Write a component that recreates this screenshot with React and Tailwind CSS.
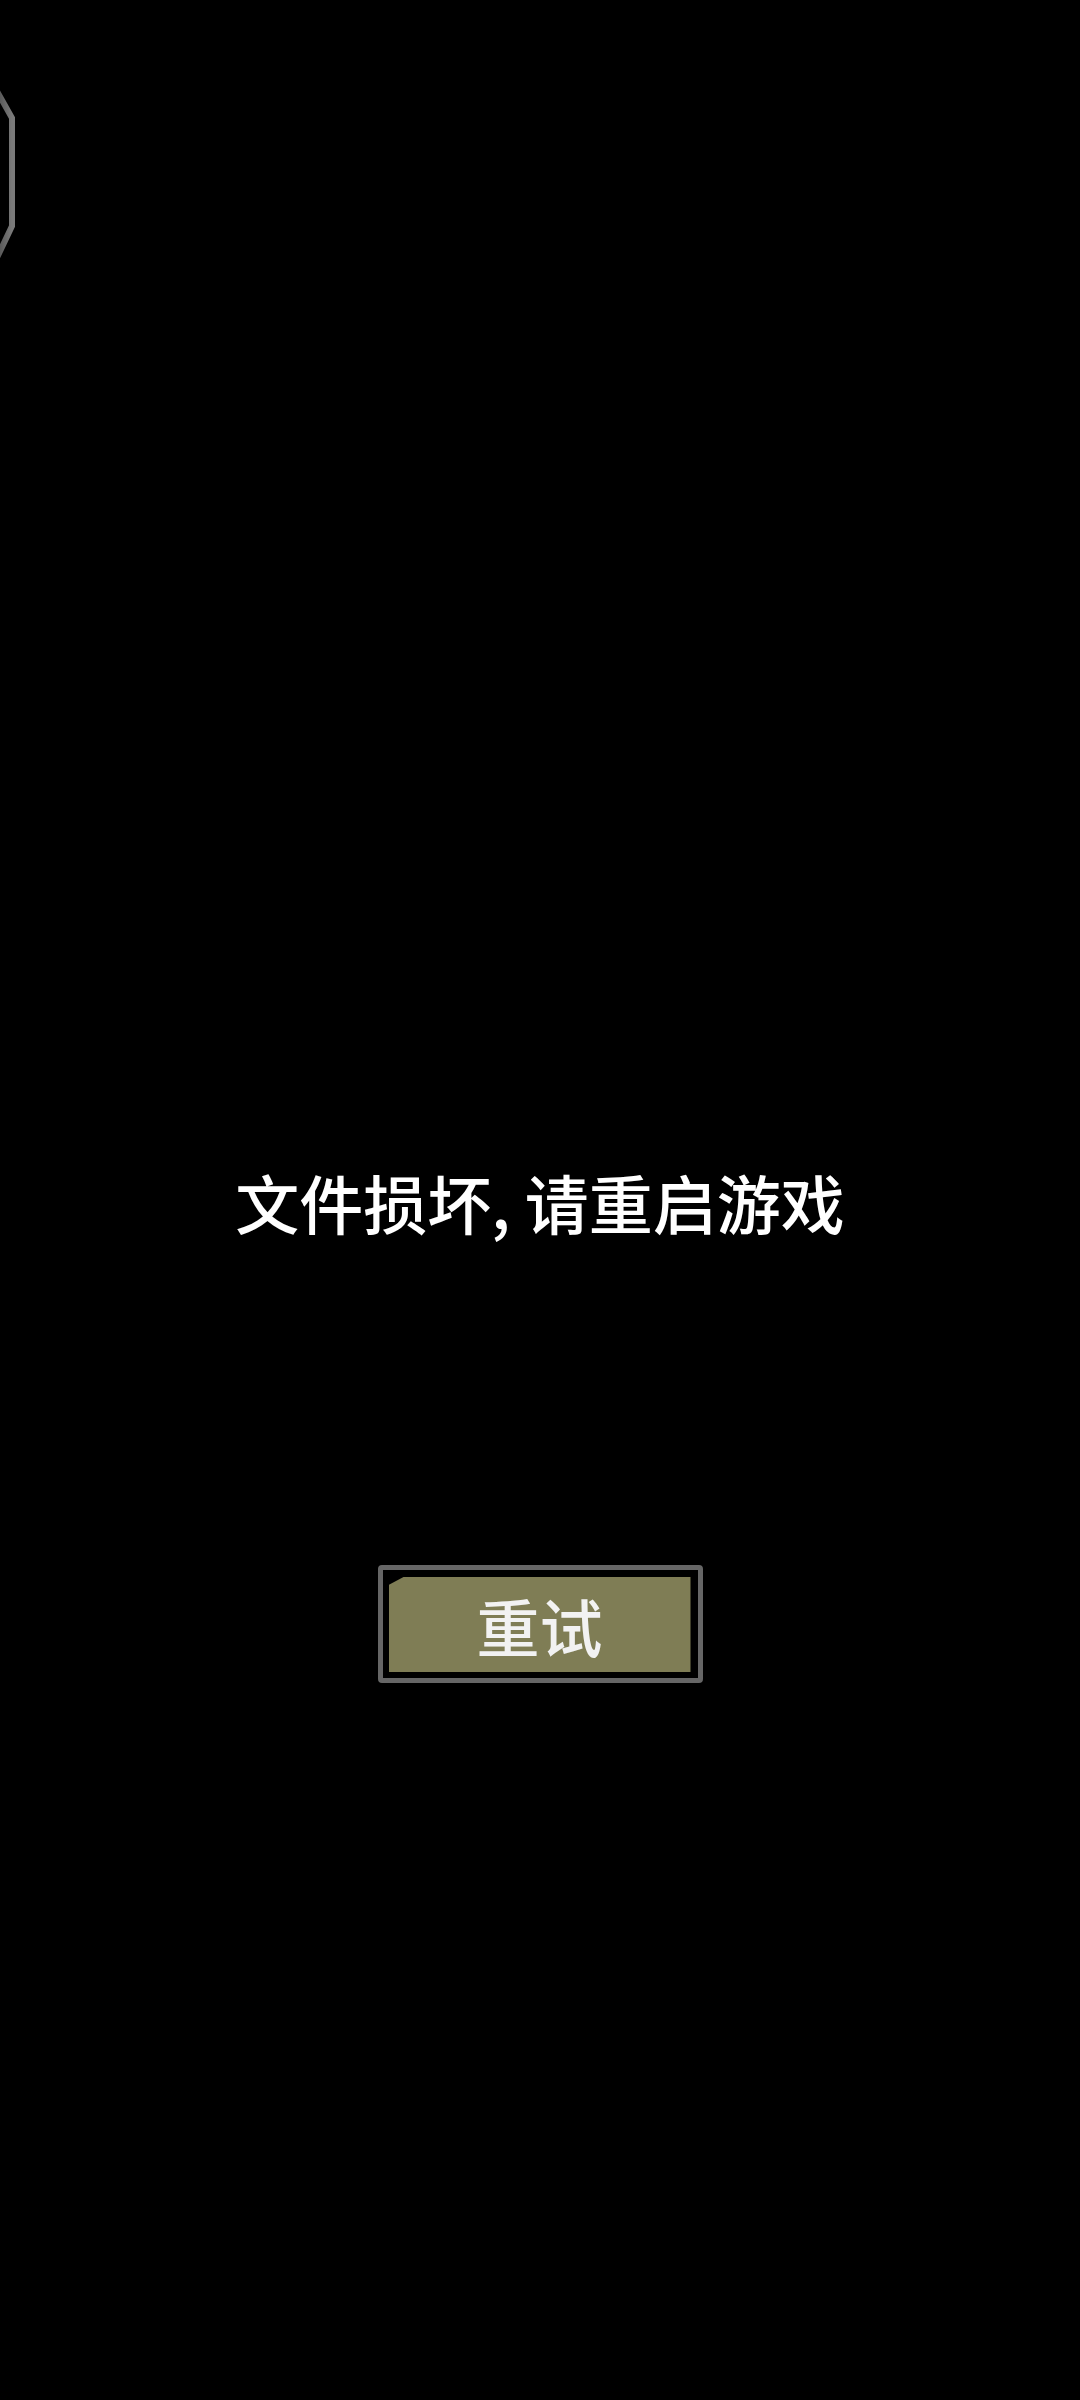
import React from "react";

export default function App() {
  return (
    <div
      className="relative w-[1080px] h-[2400px] bg-black overflow-hidden"
      style={{ fontFamily: '"Noto Sans CJK SC", "Noto Sans", sans-serif' }}
    >
      {/* partial hex frame at top-left edge */}
      <svg className="absolute left-0 top-0" width="40" height="300" viewBox="0 0 40 300">
        <defs>
          <linearGradient id="hexStroke" x1="0" y1="0" x2="1" y2="0">
            <stop offset="0" stopColor="#4a4a4a" />
            <stop offset="1" stopColor="#7a7a7a" />
          </linearGradient>
        </defs>
        <polyline
          points="-6,86 12,118 12,226 -6,264"
          fill="none"
          stroke="url(#hexStroke)"
          strokeWidth="6"
          strokeLinejoin="miter"
        />
      </svg>

      <div className="flex flex-col items-center pt-[1169px]">
        <p className="text-[64px] leading-none font-medium text-white whitespace-nowrap">
          文件损坏, 请重启游戏
        </p>

        <button className="mt-[332px] w-[325px] h-[118px] rounded-[4px] border-[5px] border-[#666666] bg-black pl-[6px] pt-[7px] pr-[7px] pb-[6px]">
          <div className="w-full h-full bg-[#7f7d55] flex items-center justify-center [clip-path:polygon(0_8px,15px_0,100%_0,100%_100%,0_100%)]">
            <span className="text-[63px] leading-none font-medium text-[#f2f2f2]">重试</span>
          </div>
        </button>
      </div>
    </div>
  );
}
